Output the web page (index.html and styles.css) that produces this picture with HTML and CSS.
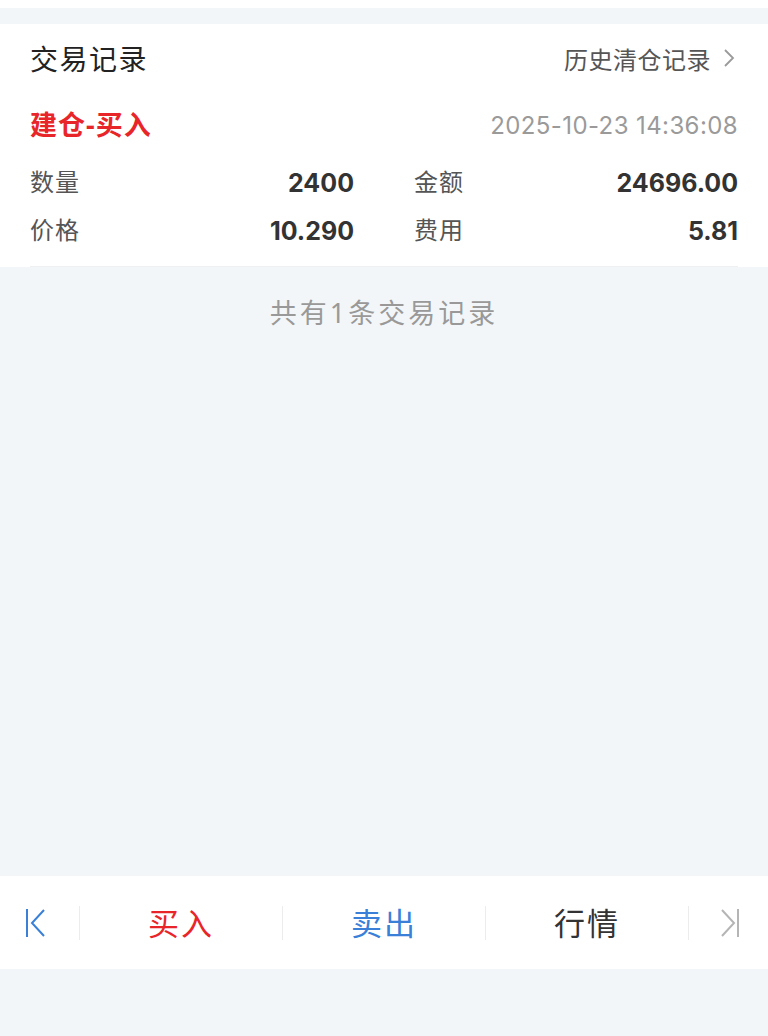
FILE: index.html
```html
<!DOCTYPE html>
<html lang="zh-CN">
<head>
    <meta charset="UTF-8">
    <meta name="viewport" content="width=device-width, initial-scale=1.0">
    <title>交易记录</title>
    <link rel="stylesheet" href="styles.css">
</head>
<body>
    <div class="page">
        <div class="top-strip"></div>
        <div class="record-card">
            <div class="card-header">
                <span class="card-title">交易记录</span>
                <span class="history-link">历史清仓记录
                    <svg class="chevron" width="14" height="22" viewBox="0 0 14 22">
                        <path d="M3 3 L11 11 L3 19" fill="none" stroke="#9a9a9a" stroke-width="1.8"/>
                    </svg>
                </span>
            </div>
            <div class="trade-status">
                <span class="trade-type">建仓-买入</span>
                <span class="trade-time">2025-10-23 14:36:08</span>
            </div>
            <div class="trade-grid">
                <div class="cell"><span class="label">数量</span><span class="value">2400</span></div>
                <div class="cell"><span class="label">金额</span><span class="value">24696.00</span></div>
                <div class="cell"><span class="label">价格</span><span class="value">10.290</span></div>
                <div class="cell"><span class="label">费用</span><span class="value">5.81</span></div>
            </div>
        </div>
        <div class="record-count">共有1条交易记录</div>
        <div class="spacer"></div>
        <div class="action-bar">
            <div class="nav-icon">
                <svg width="24" height="32" viewBox="0 0 24 32">
                    <path d="M3 2 V30" stroke="#3a80d8" stroke-width="2"/>
                    <path d="M20 3 L8 16 L20 29" fill="none" stroke="#3a80d8" stroke-width="2"/>
                </svg>
            </div>
            <div class="action buy">买入</div>
            <div class="action sell">卖出</div>
            <div class="action quote">行情</div>
            <div class="nav-icon last">
                <svg width="24" height="32" viewBox="0 0 24 32">
                    <path d="M4 3 L16 16 L4 29" fill="none" stroke="#b5b5b5" stroke-width="2"/>
                    <path d="M20 2 V30" stroke="#b5b5b5" stroke-width="2"/>
                </svg>
            </div>
        </div>
        <div class="bottom-space"></div>
    </div>
</body>
</html>
```

FILE: styles.css
```css
body {
    margin: 0;
    padding: 0;
    background-color: #f3f6f8;
    font-family: "Noto Sans", "Noto Sans CJK SC", sans-serif;
}
.page {
    height: 1036px;
    display: flex;
    flex-direction: column;
    overflow: hidden;
}
.top-strip {
    height: 8px;
    background-color: #ffffff;
    margin-bottom: 16px;
}
.record-card {
    background-color: #ffffff;
    padding: 0 30px;
}
.card-header {
    height: 68px;
    display: flex;
    align-items: center;
    justify-content: space-between;
}
.card-title {
    font-size: 28px;
    letter-spacing: 1.5px;
    color: #222222;
}
.history-link {
    display: flex;
    align-items: center;
    gap: 11px;
    font-size: 24px;
    letter-spacing: 0.5px;
    color: #555555;
}
.chevron {
    margin-right: 2px;
}
.trade-status {
    height: 50px;
    margin-top: 6px;
    display: flex;
    align-items: center;
    justify-content: space-between;
}
.trade-type {
    font-size: 27px;
    font-weight: bold;
    letter-spacing: 1px;
    color: #e8262a;
}
.trade-time {
    font-family: Inter, "Noto Sans", sans-serif;
    font-size: 24px;
    letter-spacing: 0.4px;
    padding-top: 5px;
    color: #9a9a9a;
}
.trade-grid {
    margin-top: 8px;
    padding-bottom: 14px;
    border-bottom: 1px solid #eef0f2;
    display: grid;
    grid-template-columns: 1fr 1fr;
    column-gap: 60px;
}
.cell {
    height: 48px;
    display: flex;
    align-items: center;
    justify-content: space-between;
}
.label {
    font-size: 24px;
    letter-spacing: 1px;
    color: #555555;
}
.value {
    font-family: Inter, "Noto Sans", sans-serif;
    font-size: 25px;
    font-weight: bold;
    padding-top: 6px;
    color: #333333;
}
.record-count {
    margin-top: 26px;
    line-height: 40px;
    text-align: center;
    font-size: 27px;
    letter-spacing: 3px;
    color: #999999;
}
.spacer {
    flex: 1;
}
.action-bar {
    height: 93px;
    background-color: #ffffff;
    display: flex;
    align-items: center;
}
.nav-icon {
    width: 80px;
    height: 34px;
    display: flex;
    align-items: center;
    padding-left: 24px;
    box-sizing: border-box;
    border-right: 1px solid #ececec;
}
.nav-icon.last {
    width: 79px;
    padding-left: 29px;
    border-right: none;
}
.action {
    flex: 1;
    height: 34px;
    line-height: 34px;
    text-align: center;
    font-size: 31px;
    letter-spacing: 2px;
    border-right: 1px solid #ececec;
}
.buy {
    color: #e8262a;
}
.sell {
    color: #3a80d8;
}
.quote {
    color: #333333;
}
.bottom-space {
    height: 67px;
}
```
